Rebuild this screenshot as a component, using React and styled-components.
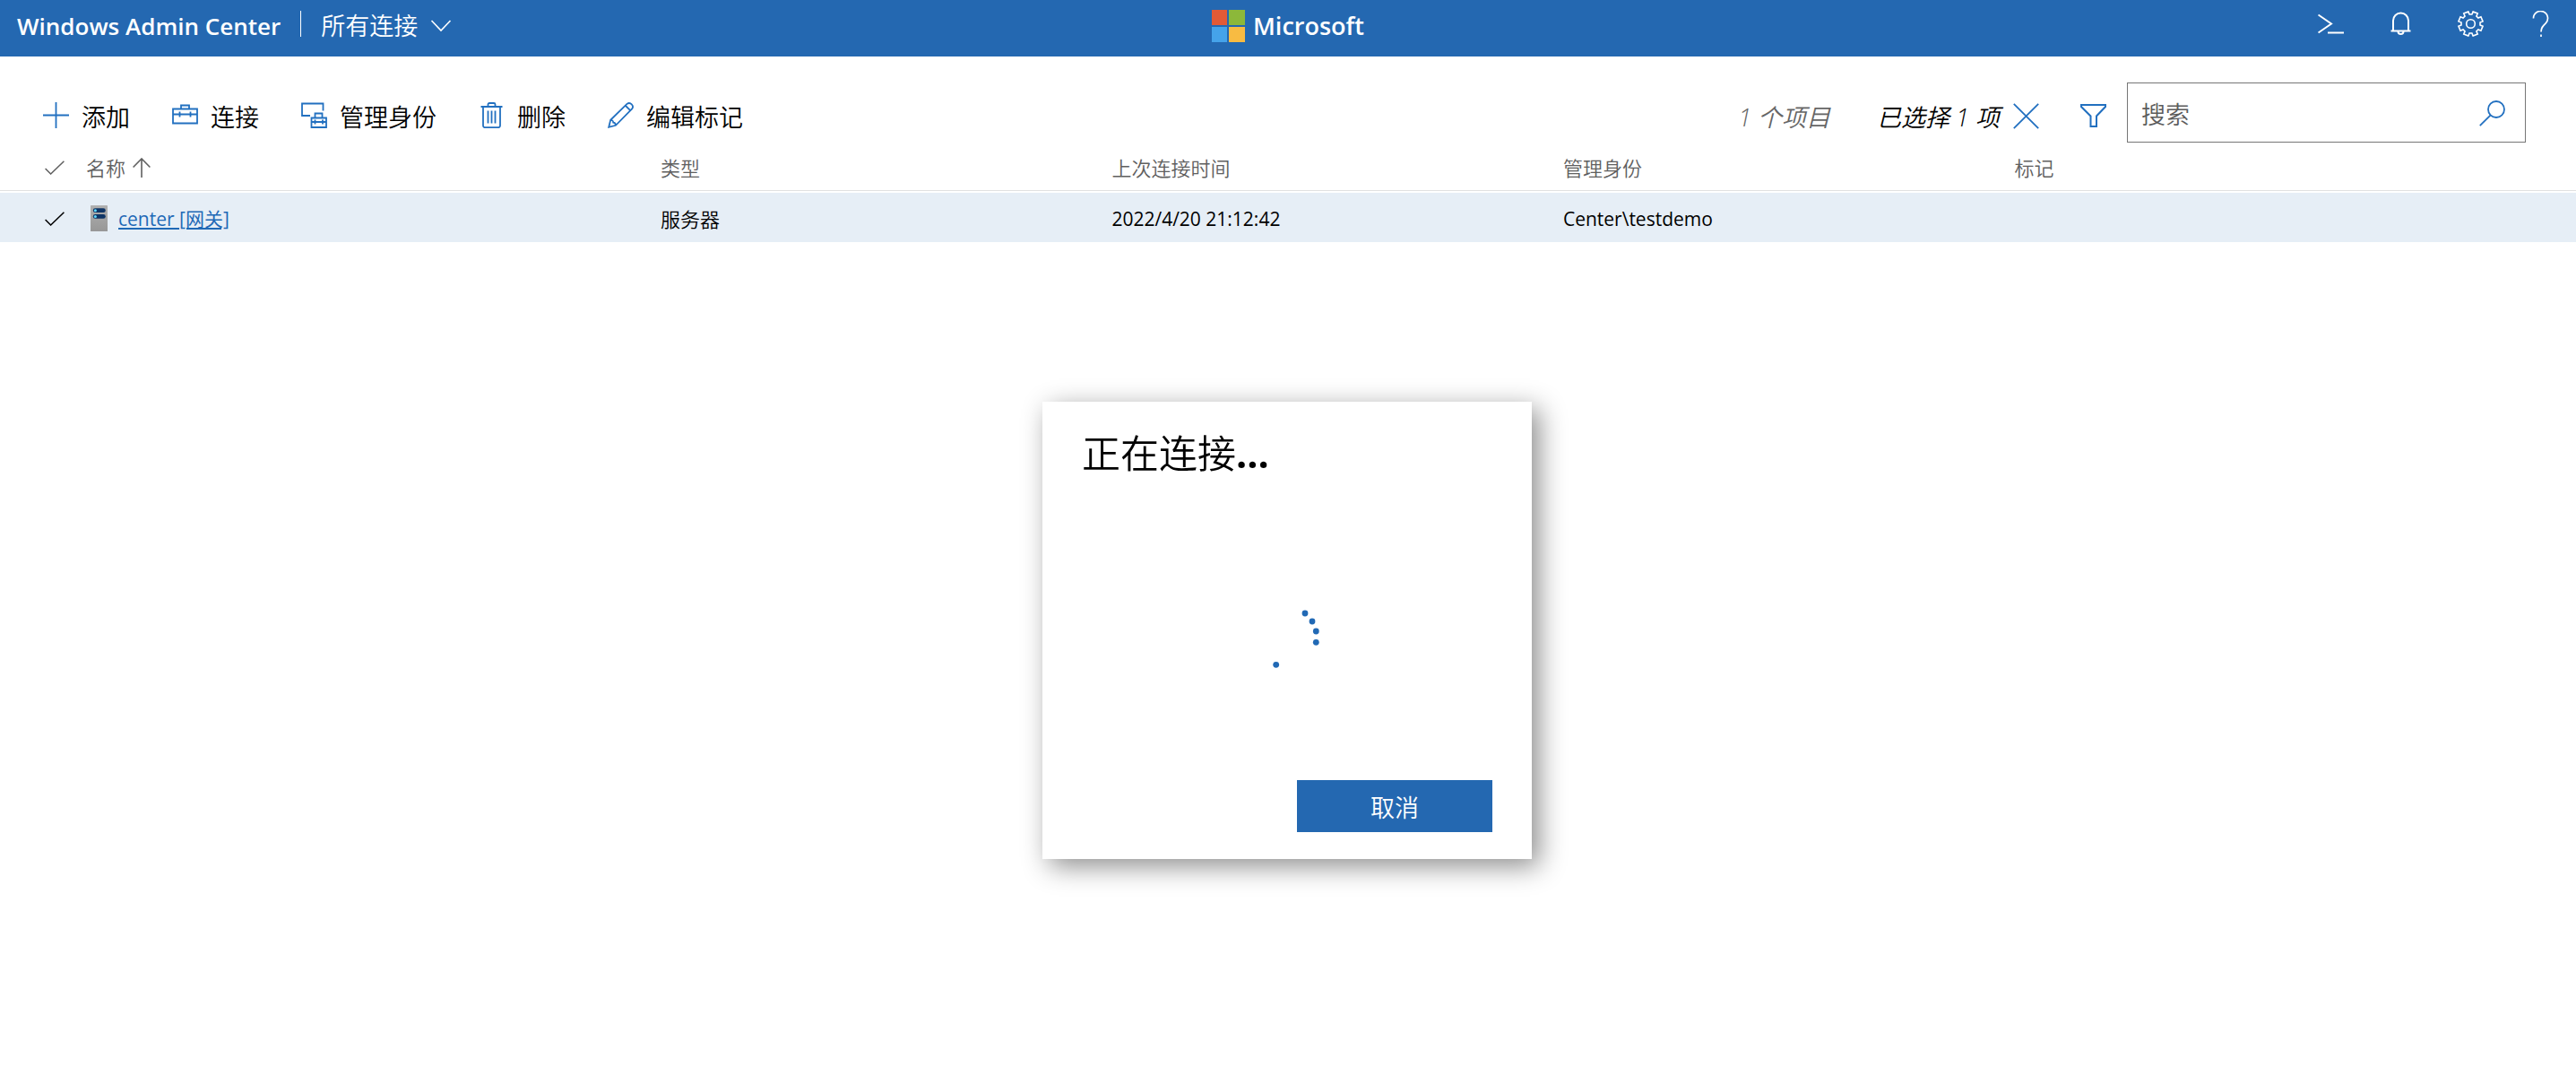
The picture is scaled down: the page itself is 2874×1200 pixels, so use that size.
import React from 'react'
import styled, { createGlobalStyle } from 'styled-components'

const GlobalStyle = createGlobalStyle`
  * {
    box-sizing: border-box;
  }
  body {
    margin: 0;
    background: #fff;
    color: #000;
    font-family: "Open Sans", "Noto Sans CJK SC", sans-serif;
    font-size: 27px;
    font-weight: 350;
  }
  button, input {
    font: inherit;
    color: inherit;
  }
  svg {
    display: block;
    flex: none;
  }
`

const Header = styled.header`
  display: grid;
  grid-template-columns: 1fr auto 1fr;
  align-items: center;
  height: 63px;
  padding: 0 19px 6px;
  background: #2468b1;
  color: #fff;
`
const HeaderLeft = styled.div`
  display: flex;
  align-items: center;
`
const Product = styled.a`
  color: #fff;
  font-size: 26px;
  font-weight: 600;
  line-height: 36px;
  text-decoration: none;
  white-space: nowrap;
`
const Divider = styled.span`
  width: 1px;
  height: 29px;
  margin: 0 22px 4px;
  background: #fff;
`
const Solution = styled.button`
  display: flex;
  align-items: center;
  gap: 14px;
  padding: 0;
  border: none;
  background: none;
  line-height: 36px;
  cursor: pointer;
`
const Brand = styled.div`
  display: flex;
  align-items: center;
  gap: 9px;
  font-size: 27px;
  font-weight: 600;
  line-height: 36px;
`
const HeaderRight = styled.nav`
  display: flex;
  justify-content: flex-end;
  gap: 49px;
  padding: 0 6px 4px 0;
`
const IconButton = styled.button`
  display: flex;
  padding: 0;
  border: none;
  background: none;
  color: ${props => props.$color || '#fff'};
  cursor: pointer;
`

const Toolbar = styled.div`
  display: flex;
  align-items: center;
  justify-content: space-between;
  height: 67px;
  margin: 29px 56px 0 48px;
`
const Actions = styled.div`
  display: flex;
  gap: 47px;
  padding-top: 6px;
`
const Action = styled.button`
  display: flex;
  align-items: center;
  gap: 14px;
  padding: 0;
  border: none;
  background: none;
  line-height: 40px;
  white-space: nowrap;
  cursor: pointer;

  svg {
    color: #2270c0;
  }
`
const Label = styled.span`
  padding-top: 4px;
`
const Tools = styled.div`
  display: flex;
  align-items: center;
`
const Status = styled.div`
  display: flex;
  align-items: center;
  padding-top: 8px;
`
const Count = styled.span`
  margin-right: 52px;
  padding-top: 2px;
  color: #666;
  font-style: italic;
  line-height: 40px;
`
const Selected = styled.span`
  margin-right: 15px;
  padding-top: 2px;
  font-style: italic;
  line-height: 40px;
`
const Spacer = styled.span`
  width: 46px;
`
const SearchBox = styled.label`
  display: flex;
  align-items: center;
  width: 445px;
  height: 67px;
  margin-left: 23px;
  padding: 2px 22px 0 15px;
  border: 1px solid #767676;
  color: #2270c0;
`
const SearchInput = styled.input`
  flex: 1;
  min-width: 0;
  padding: 2px 0 0;
  border: none;
  outline: none;
  background: none;
  color: #000;

  &::placeholder {
    color: #5c5c5c;
    opacity: 1;
  }
`

const Table = styled.table`
  width: 100%;
  table-layout: fixed;
  border-collapse: separate;
  border-spacing: 0;
  font-size: 22px;
  line-height: 30px;
`
const CheckCol = styled.col`
  width: 96px;
`
const Col = styled.col`
  width: ${props => props.$width};
`
const Th = styled.th`
  height: 54px;
  padding: 2px 0 0;
  color: #606060;
  font-weight: inherit;
  text-align: left;
  border-bottom: 1px solid #e1e1e1;
`
const Td = styled.td`
  height: 57px;
  padding: 2px 0 0;
  border-top: 2px solid #fff;
  background: #e6eef6;
  font-size: ${props => (props.$latin ? 21 : 22)}px;
  font-weight: ${props => (props.$latin ? 400 : 350)};
`
const CheckMark = styled.div`
  padding-left: 50px;
`
const NameCell = styled.div`
  display: flex;
  align-items: center;
  gap: ${props => props.$gap}px;
  padding-left: ${props => props.$indent || 0}px;
`
const NameLink = styled.a`
  color: #1f69b6;
  text-decoration: underline;
  text-underline-offset: 2px;
`

const Overlay = styled.div`
  position: fixed;
  inset: 0;
  display: flex;
  align-items: flex-start;
  justify-content: center;
  padding: 448px 2px 0 0;
`
const Dialog = styled.section`
  display: flex;
  flex-direction: column;
  width: 546px;
  height: 510px;
  padding: 26px 44px 30px;
  background: #fff;
  box-shadow: 8px 8px 28px rgba(0, 0, 0, 0.45);
`
const Title = styled.h1`
  margin: 0;
  font-size: 43px;
  font-weight: inherit;
  line-height: 64px;
`
const Dots = styled.span`
  font-weight: 700;
`
const Loading = styled.div`
  flex: 1;
  display: flex;
  align-items: center;
  justify-content: center;
  padding-top: 14px;
`
const Cancel = styled.button`
  align-self: flex-end;
  width: 218px;
  height: 58px;
  padding: 0;
  border: none;
  background: #2468b1;
  color: #fff;
  cursor: pointer;
`

const Icon = ({ size = 29, width = size, height = size, stroke = 2, children }) => (
  <svg width={width} height={height} viewBox={`0 0 ${width} ${height}`} fill="none" stroke="currentColor" strokeWidth={stroke} aria-hidden="true">
    {children}
  </svg>
)

const icons = {
  add: <path d="M14.5 0v29M0 14.5h29" />,
  connect: <path d="M1 7.5h27v16H1zM1 13.5h7M9 13.5h11M21 13.5h7M8.5 10.5v6M20.5 10.5v6M10 7V3.5h9V7" />,
  manageAs: <path d="M10 15H1V1.500h23.500v8M11.500 17.500h16.500v10.500H11.500zM11.500 22h16.500M15.500 19.500v5M24 19.500v5M15.500 17v-4.500h8v4.500" />,
  trash: <path d="M2.500 5h24M5 5v21a2.200 2.200 0 0 0 2.200 2.200h14.600a2.200 2.200 0 0 0 2.200-2.200V5M10.500 5V2.500a1.500 1.500 0 0 1 1.500-1.500h5a1.500 1.500 0 0 1 1.500 1.500V5M10.500 9.500v14M14.500 9.500v14M18.500 9.500v14" />,
  edit: <path d="M1.200 27.800l2-8L21.500 1.900a4 4 0 0 1 5.600 5.600L9 25.800zM3.200 19.800c1.700 0 2.700 0 3 2.800 2.500.2 2.800 1.200 2.800 3.200M20 4l5.200 5.200" />,
  close: <path d="M.8.8l27.400 27.400M28.200.8L.8 28.200" />,
  filter: <path d="M1 2h27v2L18 14.500v11.500h-6.500V14.500L1 4z" />,
  search: (
    <>
      <circle cx="19" cy="10" r="9" />
      <path d="M12.700 16.300L.8 28.200" />
    </>
  ),
  terminal: <path d="M.5 4.500l14.500 10-14.500 10M11 24.500h18" />,
  bell: (
    <>
      <path d="M3.500 22.500h22M6 22V11a8.500 8.500 0 0 1 17 0v11" />
      <path d="M11.500 23a3 3 0 0 0 6 0" />
    </>
  ),
  help: <path d="M6.500 8.500a8 8 0 1 1 13.600 5.600c-3 2.900-5.100 4.400-5.100 9.400M15 26.500v2.500" />,
}

// eight teeth around the hub, each one an eighth of a turn
const gearPath = () => {
  const points = []
  for (let i = 0; i < 8; i++) {
    const teeth = [[-0.26, 10.6], [-0.2, 13.8], [0.2, 13.8], [0.26, 10.6]]
    teeth.forEach(([offset, radius]) => {
      const angle = (i + 0.5) * Math.PI / 4 + offset
      points.push(`${(14.5 + radius * Math.cos(angle)).toFixed(2)} ${(14.5 + radius * Math.sin(angle)).toFixed(2)}`)
    })
  }
  return `M${points.join('L')}Z`
}

const Check = () => (
  <svg width="22" height="16" viewBox="0 0 22 16" fill="none" stroke="currentColor" strokeWidth="1.5" aria-hidden="true">
    <path d="M.6 9l6 6L21.400.8" />
  </svg>
)

const MicrosoftLogo = () => (
  <svg width="37" height="36" viewBox="0 0 37 36" aria-hidden="true">
    <path fill="#e25a36" d="M0 0h17v17H0z" />
    <path fill="#8cb83a" d="M19 0h18v17H19z" />
    <path fill="#45a3ea" d="M0 19h17v17H0z" />
    <path fill="#f8bb42" d="M19 19h18v17H19z" />
  </svg>
)

const ServerIcon = () => (
  <svg width="19" height="29" viewBox="0 0 19 29" aria-hidden="true">
    <defs>
      <linearGradient id="server" x1="0" y1="0" x2="0" y2="1">
        <stop offset="0" stopColor="#b0b0b0" />
        <stop offset="1" stopColor="#979797" />
      </linearGradient>
    </defs>
    <rect width="19" height="29" rx=".6" fill="url(#server)" />
    <rect x="2.800" y="3.300" width="14" height="4.800" rx="2.400" fill="#0f3566" />
    <rect x="2.800" y="10" width="14" height="4.800" rx="2.400" fill="#0f3566" />
    <circle cx="5.400" cy="5.700" r="1.500" fill="#5fdcff" />
    <circle cx="5.400" cy="12.400" r="1.500" fill="#5fdcff" />
  </svg>
)

const Spinner = () => (
  <svg width="72" height="72" viewBox="0 0 72 72" fill="#2169b5" role="img" aria-label="正在连接">
    <circle cx="56" cy="9" r="3.400" />
    <circle cx="64" cy="18" r="3.400" />
    <circle cx="68.300" cy="29" r="3.400" />
    <circle cx="68.300" cy="41.300" r="3.400" />
    <circle cx="23.700" cy="66.300" r="3.400" />
  </svg>
)

const actions = [
  { icon: 'add', label: '添加' },
  { icon: 'connect', label: '连接' },
  { icon: 'manageAs', label: '管理身份' },
  { icon: 'trash', label: '删除' },
  { icon: 'edit', label: '编辑标记' },
]

const connections = [
  { name: 'center [网关]', type: '服务器', time: '2022/4/20 21:12:42', user: 'Center\\testdemo', tags: '' },
]

const App = () => {
  return (
    <>
      <GlobalStyle />
      <Header>
        <HeaderLeft>
          <Product href="#">Windows Admin Center</Product>
          <Divider />
          <Solution>
            所有连接
            <Icon width={24} height={14} stroke={1.6}>
              <path d="M1.500 1l10.500 11L22.500 1" />
            </Icon>
          </Solution>
        </HeaderLeft>
        <Brand>
          <MicrosoftLogo />
          Microsoft
        </Brand>
        <HeaderRight>
          <IconButton aria-label="PowerShell"><Icon>{icons.terminal}</Icon></IconButton>
          <IconButton aria-label="通知"><Icon>{icons.bell}</Icon></IconButton>
          <IconButton aria-label="设置">
            <Icon stroke={1.6}>
              <path d={gearPath()} />
              <circle cx="14.500" cy="14.500" r="4.800" />
            </Icon>
          </IconButton>
          <IconButton aria-label="帮助"><Icon stroke={1.7}>{icons.help}</Icon></IconButton>
        </HeaderRight>
      </Header>

      <Toolbar>
        <Actions>
          {actions.map(({ icon, label }) => (
            <Action key={icon}>
              <Icon stroke={1.8}>{icons[icon]}</Icon>
              <Label>{label}</Label>
            </Action>
          ))}
        </Actions>
        <Tools>
          <Status>
            <Count>1 个项目</Count>
            <Selected>已选择 1 项</Selected>
            <IconButton $color="#2270c0" aria-label="清除选择"><Icon stroke={1.8}>{icons.close}</Icon></IconButton>
            <Spacer />
            <IconButton $color="#2270c0" aria-label="筛选"><Icon>{icons.filter}</Icon></IconButton>
          </Status>
          <SearchBox>
            <SearchInput type="text" placeholder="搜索" aria-label="搜索" />
            <Icon stroke={1.8}>{icons.search}</Icon>
          </SearchBox>
        </Tools>
      </Toolbar>

      <Table>
        <colgroup>
          <CheckCol />
          <Col $width="22.300%" />
          <Col $width="17.520%" />
          <Col $width="17.520%" />
          <Col $width="17.520%" />
          <Col />
        </colgroup>
        <thead>
          <tr>
            <Th aria-label="选择"><CheckMark><Check /></CheckMark></Th>
            <Th>
              <NameCell $gap={8}>
                名称
                <Icon width={20} height={22} stroke={1.6}>
                  <path d="M10 22V1M.6 10.500L10 1l9.400 9.500" />
                </Icon>
              </NameCell>
            </Th>
            <Th>类型</Th>
            <Th>上次连接时间</Th>
            <Th>管理身份</Th>
            <Th>标记</Th>
          </tr>
        </thead>
        <tbody>
          {connections.map(item => (
            <tr key={item.name}>
              <Td><CheckMark><Check /></CheckMark></Td>
              <Td $latin>
                <NameCell $gap={12} $indent={5}>
                  <ServerIcon />
                  <NameLink href="#">{item.name}</NameLink>
                </NameCell>
              </Td>
              <Td>{item.type}</Td>
              <Td $latin>{item.time}</Td>
              <Td $latin>{item.user}</Td>
              <Td>{item.tags}</Td>
            </tr>
          ))}
        </tbody>
      </Table>

      <Overlay>
        <Dialog role="dialog" aria-labelledby="dialog-title">
          <Title id="dialog-title">正在连接<Dots>...</Dots></Title>
          <Loading>
            <Spinner />
          </Loading>
          <Cancel>取消</Cancel>
        </Dialog>
      </Overlay>
    </>
  )
}

export default App
